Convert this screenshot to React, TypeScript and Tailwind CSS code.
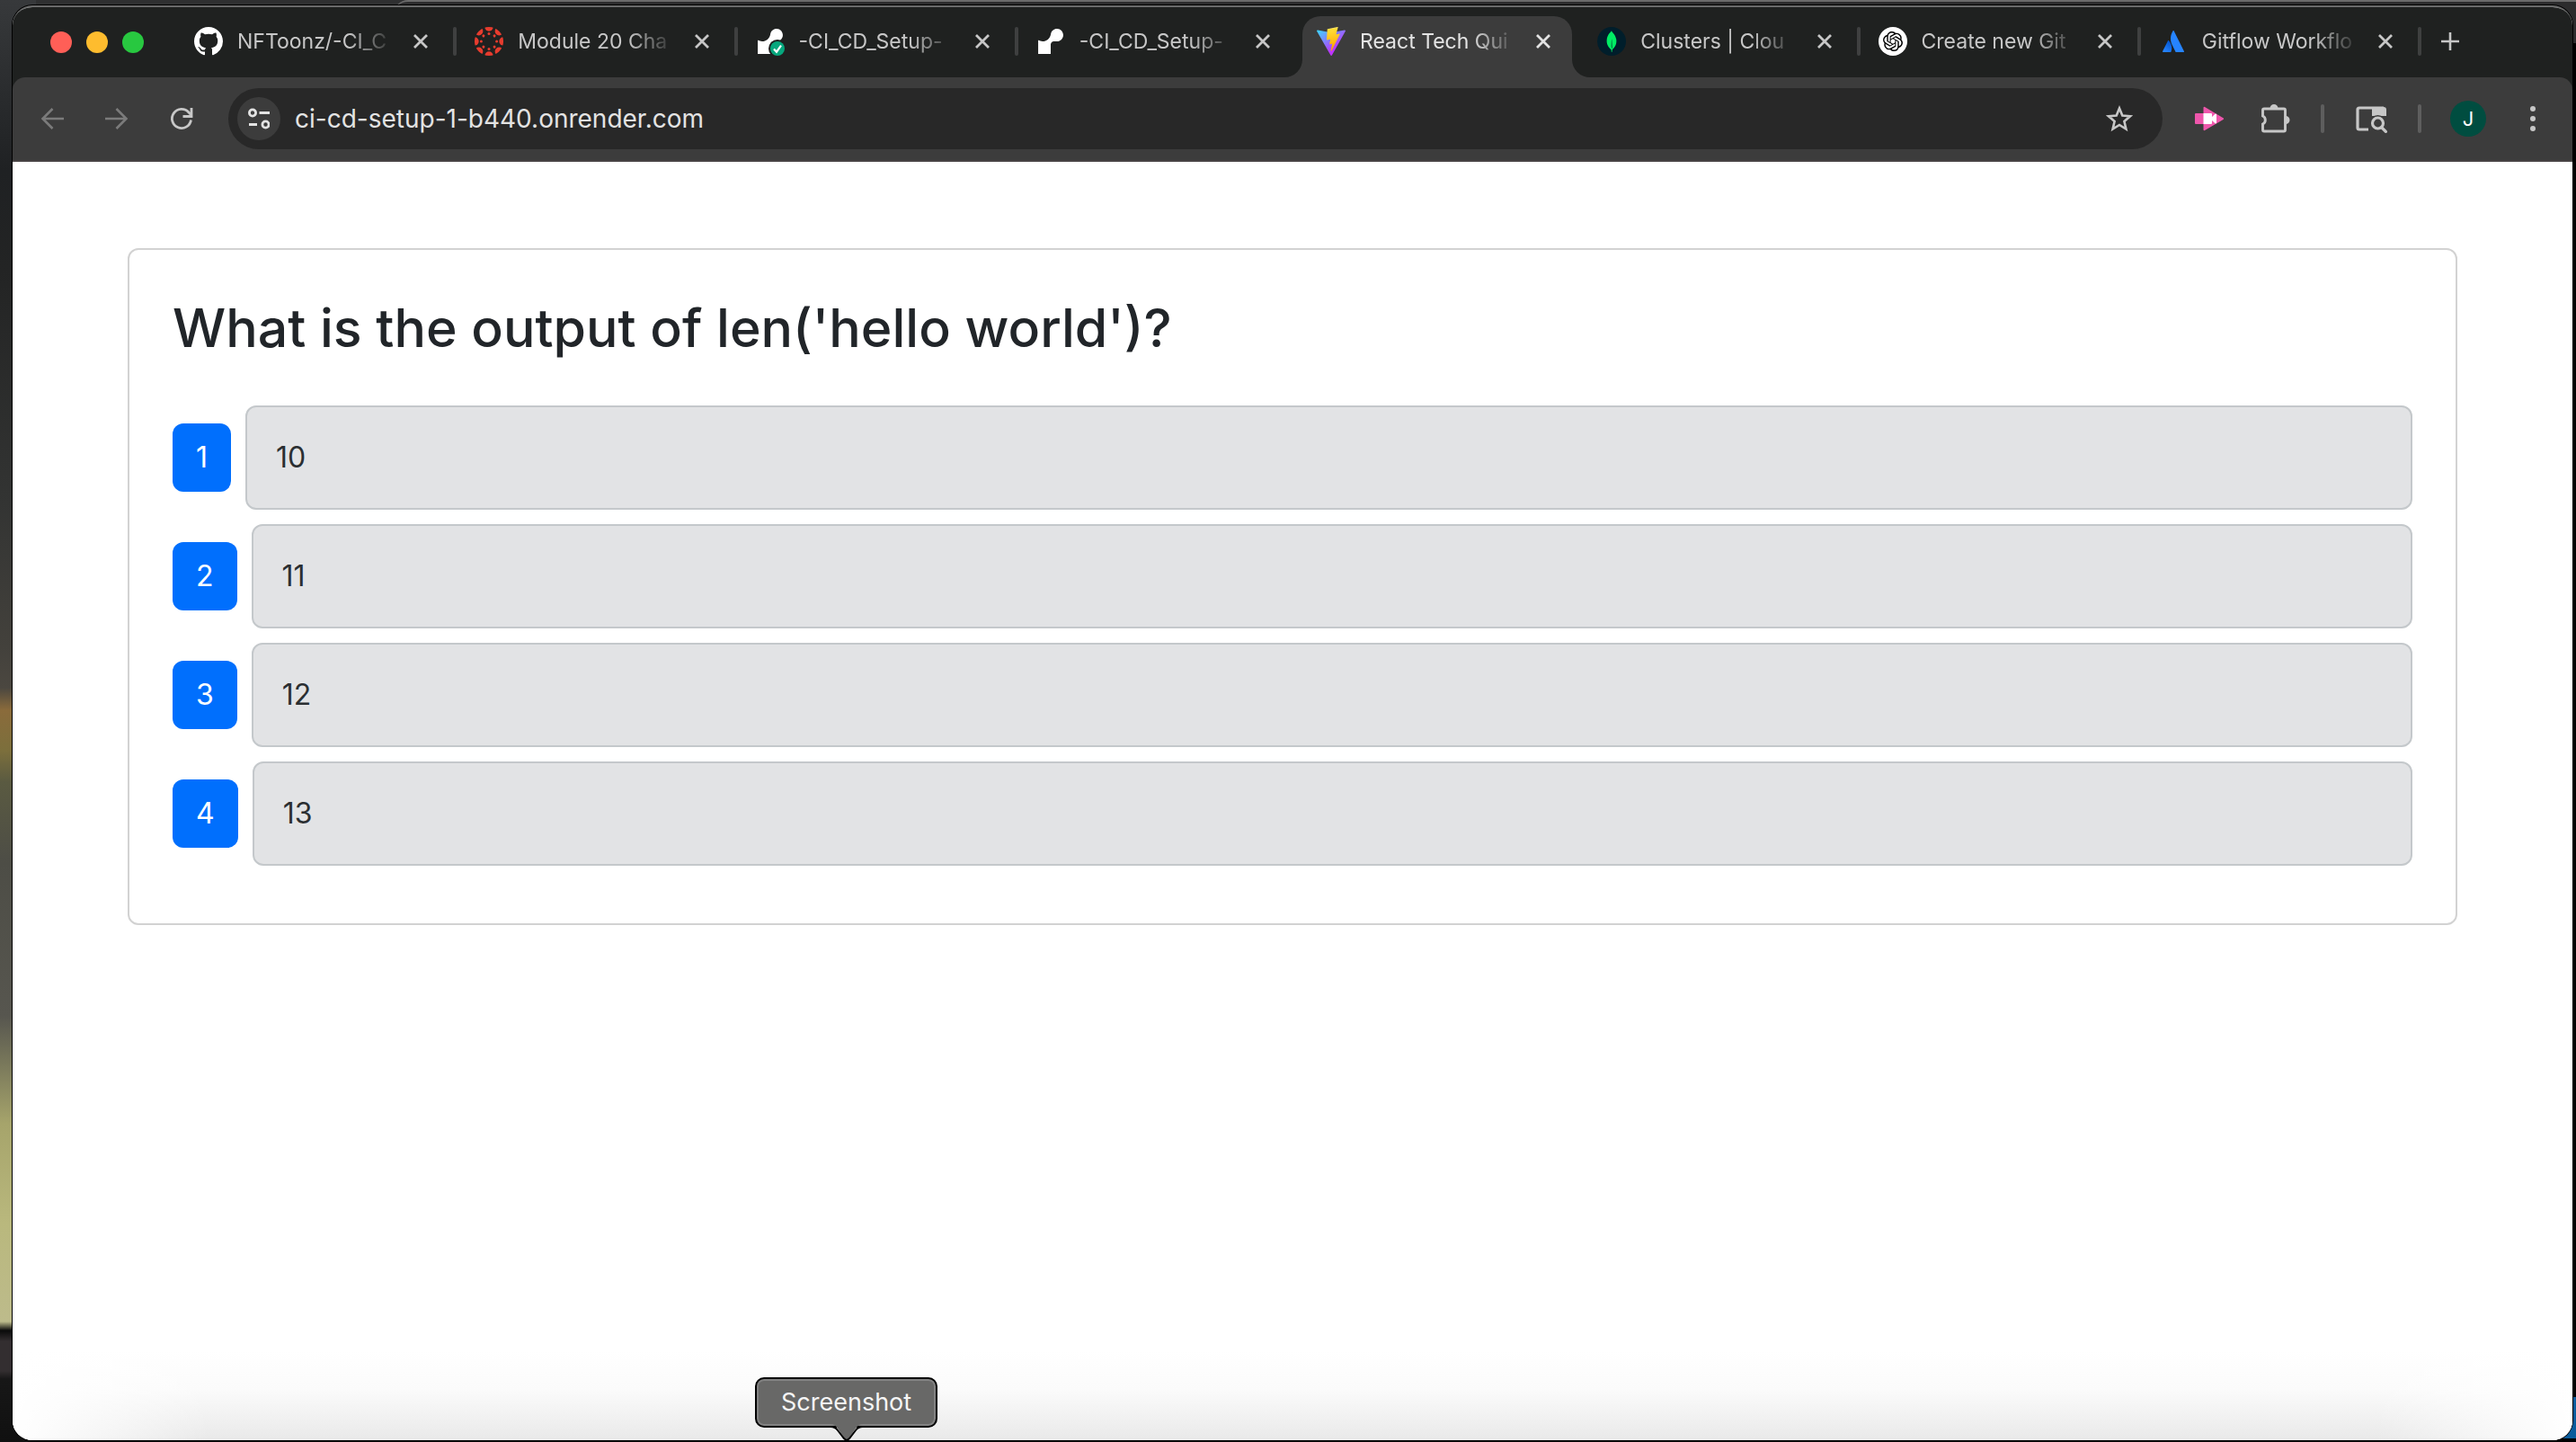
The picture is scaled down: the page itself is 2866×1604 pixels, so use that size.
import type { ReactNode } from "react";
import { SiMongodb, SiOpenai } from "react-icons/si";

const RENDER_PATH =
  "M18.263.007c-3.121-.147-5.744 2.109-6.192 5.082-.018.138-.045.272-.067.405-.696 3.703-3.936 6.507-7.827 6.507-1.388 0-2.691-.356-3.825-.979a.2024.2024 0 0 0-.302.178V24H12v-8.999c0-1.656 1.338-3 2.987-3h2.988c3.382 0 6.103-2.817 5.97-6.244-.12-3.084-2.61-5.603-5.682-5.75";

function GithubIcon() {
  return (
    <svg viewBox="0 0 16 16" className="size-8" fill="#fff" aria-hidden="true">
      <path d="M8 0C3.58 0 0 3.58 0 8c0 3.54 2.29 6.53 5.47 7.59.4.07.55-.17.55-.38 0-.19-.01-.82-.01-1.49-2.01.37-2.53-.49-2.69-.94-.09-.23-.48-.94-.82-1.13-.28-.15-.68-.52-.01-.53.63-.01 1.08.58 1.23.82.72 1.21 1.87.87 2.33.66.07-.52.28-.87.51-1.07-1.78-.2-3.64-.89-3.64-3.95 0-.87.31-1.59.82-2.15-.08-.2-.36-1.02.08-2.12 0 0 .67-.21 2.2.82.64-.18 1.32-.27 2-.27.68 0 1.36.09 2 .27 1.53-1.04 2.2-.82 2.2-.82.44 1.1.16 1.92.08 2.12.51.56.82 1.27.82 2.15 0 3.07-1.87 3.75-3.65 3.95.29.25.54.73.54 1.48 0 1.07-.01 1.93-.01 2.2 0 .21.15.46.55.38A8.013 8.013 0 0016 8c0-4.42-3.58-8-8-8z" />
    </svg>
  );
}

function CanvasIcon() {
  const spokes = [0, 45, 90, 135, 180, 225, 270, 315];
  return (
    <svg viewBox="0 0 32 32" className="size-8" fill="#e73c2e" aria-hidden="true">
      <clipPath id="canvas-disc">
        <circle cx="16" cy="16" r="16" />
      </clipPath>
      <g clipPath="url(#canvas-disc)">
        {spokes.map((angle) => (
          <g key={angle} transform={`rotate(${angle} 16 16)`}>
            <circle cx="16" cy="0" r="4.7" />
            <circle cx="16" cy="7.4" r="1.5" />
          </g>
        ))}
      </g>
    </svg>
  );
}

function RenderIcon({ passed = false }: { passed?: boolean }) {
  return (
    <svg viewBox="0 0 32 32" className="size-8" aria-hidden="true">
      <g transform="translate(2 2) scale(1.1667)">
        <path d={RENDER_PATH} fill="#fff" />
      </g>
      {passed && (
        <>
          <circle cx="24" cy="24" r="10" fill="#1f2120" />
          <circle cx="24" cy="24" r="8" fill="#06a77d" />
          <path d="m20 24.5 3 3.2 5-7" fill="none" stroke="#fff" strokeWidth="2.2" />
        </>
      )}
    </svg>
  );
}

function ViteIcon() {
  return (
    <svg viewBox="0 0 256 257" className="size-8" aria-hidden="true">
      <defs>
        <linearGradient id="vite-a" x1="-.828%" x2="57.636%" y1="7.652%" y2="78.411%">
          <stop offset="0%" stopColor="#41D1FF" />
          <stop offset="100%" stopColor="#BD34FE" />
        </linearGradient>
        <linearGradient id="vite-b" x1="43.376%" x2="50.316%" y1="2.242%" y2="89.03%">
          <stop offset="0%" stopColor="#FFEA83" />
          <stop offset="8.333%" stopColor="#FFDD35" />
          <stop offset="100%" stopColor="#FFA800" />
        </linearGradient>
      </defs>
      <path
        fill="url(#vite-a)"
        d="M255.153 37.938L134.897 252.976c-2.483 4.44-8.862 4.466-11.382.048L.875 37.958c-2.746-4.814 1.371-10.646 6.827-9.67l120.385 21.517a6.537 6.537 0 0 0 2.322-.004l117.867-21.483c5.438-.991 9.574 4.796 6.877 9.62Z"
      />
      <path
        fill="url(#vite-b)"
        d="M185.432.063L96.44 17.501a3.268 3.268 0 0 0-2.634 3.014l-5.474 92.456a3.268 3.268 0 0 0 3.997 3.378l24.777-5.718c2.318-.535 4.413 1.507 3.936 3.838l-7.361 36.047c-.495 2.426 1.782 4.5 4.151 3.78l15.304-4.649c2.372-.72 4.652 1.36 4.15 3.788l-11.698 56.621c-.732 3.542 3.979 5.473 5.943 2.437l1.313-2.028l72.516-144.72c1.215-2.423-.88-5.186-3.54-4.672l-25.505 4.922c-2.396.462-4.435-1.77-3.759-4.114l16.646-57.705c.677-2.35-1.37-4.583-3.769-4.113Z"
      />
    </svg>
  );
}

function AtlassianIcon() {
  return (
    <svg viewBox="0 0 32 32" className="size-8" aria-hidden="true">
      <defs>
        <linearGradient id="atl" x1="13" y1="16" x2="6" y2="27" gradientUnits="userSpaceOnUse">
          <stop offset="0" stopColor="#0052cc" />
          <stop offset="1" stopColor="#2684ff" />
        </linearGradient>
      </defs>
      <path
        fill="url(#atl)"
        d="M11.2 15.4c-.4-.5-1-.4-1.3.1L4.1 27.1c-.2.5.1 1 .6 1h8.100c.3 0 .5-.2.6-.4 1.800-3.600.7-9.100-2.200-12.300Z"
      />
      <path
        fill="#2684ff"
        d="M15.500 4.400c-3.300 5.200-3 11-.9 15.300l3.900 8c.1.200.4.400.600.400h8.200c.5 0 .900-.5.600-1L16.700 4.400c-.3-.5-.9-.5-1.200 0Z"
      />
    </svg>
  );
}

function Disc({ className, children }: { className: string; children: ReactNode }) {
  return <span className={`flex size-8 items-center justify-center rounded-full ${className}`}>{children}</span>;
}

type Tab = { title: string; icon: ReactNode; active?: boolean };

const tabs: Tab[] = [
  { title: "NFToonz/-CI_C", icon: <GithubIcon /> },
  { title: "Module 20 Cha", icon: <CanvasIcon /> },
  { title: "-CI_CD_Setup-", icon: <RenderIcon passed /> },
  { title: "-CI_CD_Setup-", icon: <RenderIcon /> },
  { title: "React Tech Qui", icon: <ViteIcon />, active: true },
  {
    title: "Clusters | Clou",
    icon: (
      <Disc className="bg-[#001e2b]">
        <SiMongodb className="size-6 text-[#00ed64]" />
      </Disc>
    ),
  },
  {
    title: "Create new Git",
    icon: (
      <Disc className="bg-white">
        <SiOpenai className="size-[22px] text-black" />
      </Disc>
    ),
  },
  { title: "Gitflow Workflo", icon: <AtlassianIcon /> },
];

function Flare({ side }: { side: "left" | "right" }) {
  return (
    <svg
      viewBox="0 0 20 20"
      className={side === "left" ? "absolute right-full bottom-0 size-5" : "absolute bottom-0 left-full size-5"}
      fill="#3c3c3c"
      aria-hidden="true"
    >
      <path d={side === "left" ? "M20 0v20H0A20 20 0 0 0 20 0Z" : "M0 0v20h20A20 20 0 0 1 0 0Z"} />
    </svg>
  );
}

function TabItem({ tab, divided }: { tab: Tab; divided: boolean }) {
  return (
    <div className="relative flex min-w-0 flex-1 px-[6px]">
      <div
        className={
          tab.active
            ? "relative flex min-w-0 flex-1 items-center rounded-t-[20px] bg-[#3c3c3c] pr-5 pl-4 text-[#e3e3e3]"
            : "relative flex min-w-0 flex-1 items-center pr-5 pl-4 text-[#c7c7c7]"
        }
      >
        {tab.active && <Flare side="left" />}
        {tab.active && <Flare side="right" />}
        <button role="tab" aria-selected={!!tab.active} className="mb-3 flex min-w-0 flex-1 items-center gap-4">
          <span className="shrink-0">{tab.icon}</span>
          <span className="w-[176px] text-left text-[23px] leading-8 whitespace-nowrap [mask-image:linear-gradient(to_right,black_70%,transparent_100%)]">
            {tab.title}
          </span>
        </button>
        <button aria-label={`Close ${tab.title}`} className="mb-3 flex size-6 items-center justify-center">
          <svg viewBox="0 0 16 16" className="size-4" stroke="currentColor" strokeWidth="2.8" aria-hidden="true">
            <path d="m1 1 14 14M15 1 1 15" />
          </svg>
        </button>
      </div>
      {divided && <span className="absolute top-3 -right-[2px] h-8 w-1 rounded-full bg-[#3f4040]" />}
    </div>
  );
}

function TabStrip() {
  return (
    <div className="flex h-[78px] bg-[#1f2120] pt-[10px]">
      <div className="flex w-[180px] shrink-0 items-center gap-4 pb-[10px] pl-[42px]">
        <button aria-label="Close window" className="size-6 rounded-full bg-[#ff5f57]" />
        <button aria-label="Minimise window" className="size-6 rounded-full bg-[#febc2e]" />
        <button aria-label="Zoom window" className="size-6 rounded-full bg-[#28c840]" />
      </div>
      <div role="tablist" className="flex min-w-0 flex-1">
        {tabs.map((tab, i) => (
          <TabItem key={i} tab={tab} divided={!tab.active && !tabs[i + 1]?.active} />
        ))}
      </div>
      <div className="flex w-[170px] shrink-0 items-center pb-3 pl-[24px]">
        <button aria-label="New tab" className="text-[#c7c7c7]">
          <svg viewBox="0 0 20 20" className="size-5" stroke="currentColor" strokeWidth="2.6" aria-hidden="true">
            <path d="M10 0v20M0 10h20" />
          </svg>
        </button>
      </div>
    </div>
  );
}

function Toolbar() {
  return (
    <div className="bg-[#1f2120]">
      <div className="flex h-[94px] items-center rounded-t-[14px] border-b-2 border-[#474344] bg-[#3c3c3c] pr-10 pl-7 text-[#c7c7c7]">
        <div className="flex shrink-0 items-center gap-10">
          <button aria-label="Back" className="px-[2px] text-[#7b7b7b]">
            <svg viewBox="0 0 28 28" className="size-7" fill="none" stroke="currentColor" strokeWidth="2.6" aria-hidden="true">
              <path d="M27 14H4M14.500 3 3.500 14l11 11" />
            </svg>
          </button>
          <button aria-label="Forward" className="px-[2px] text-[#7b7b7b]">
            <svg viewBox="0 0 28 28" className="size-7" fill="none" stroke="currentColor" strokeWidth="2.6" aria-hidden="true">
              <path d="M1 14h23M13.500 3l11 11-11 11" />
            </svg>
          </button>
          <button aria-label="Reload" className="px-[2px]">
            <svg viewBox="0 0 28 28" className="size-7" fill="none" stroke="currentColor" strokeWidth="2.8" aria-hidden="true">
              <path d="M24.500 15.500A10.600 10.600 0 1 1 22 7l2.500 2.500" />
              <path d="M25 2v9.500h-9.500" />
            </svg>
          </button>
        </div>
        <div className="ml-9 flex h-[68px] min-w-0 flex-1 items-center rounded-full bg-[#282828] pr-8 pl-[10px]">
          <button aria-label="Site information" className="flex size-12 shrink-0 items-center justify-center rounded-full bg-[#3c3c3c] text-[#e3e3e3]">
            <svg viewBox="0 0 24 24" className="size-6" fill="none" stroke="currentColor" strokeWidth="2.800" aria-hidden="true">
              <circle cx="5" cy="5.500" r="3.600" />
              <path d="M12.500 5.500H24M1 18.500h9" />
              <circle cx="19.500" cy="18.500" r="3.600" />
            </svg>
          </button>
          <input
            aria-label="Address"
            defaultValue="ci-cd-setup-1-b440.onrender.com"
            className="ml-4 min-w-0 flex-1 bg-transparent text-[28px] leading-10 text-[#e3e3e3] outline-none"
          />
          <button aria-label="Bookmark this tab" className="shrink-0">
            <svg viewBox="0 0 32 32" className="size-8" fill="none" stroke="currentColor" strokeWidth="2.600" aria-hidden="true">
              <path d="m16 4.500 3.300 8.100 8.700.7-6.600 5.700 2 8.500-7.400-4.500-7.400 4.500 2-8.500L4 13.300l8.700-.7z" />
            </svg>
          </button>
        </div>
        <div className="ml-9 flex shrink-0 items-center">
          <button aria-label="Screen recorder">
            <svg viewBox="0 0 32 32" className="size-8" aria-hidden="true">
              <path d="M1 10h8.500V3.900a1 1 0 0 1 1.500-.9l20.500 12.200a1 1 0 0 1 0 1.700L11 29.100a1 1 0 0 1-1.500-.9V22H1a1 1 0 0 1-1-1V11a1 1 0 0 1 1-1Z" fill="#ee56ab" />
              <path d="M9.500 10H18a1 1 0 0 1 1 1v3l3.500-3.300H24v10.600h-1.500L19 18v3a1 1 0 0 1-1 1H9.500Z" fill="#fff" />
            </svg>
          </button>
          <button aria-label="Extensions" className="ml-10">
            <svg viewBox="0 0 36 36" className="size-9" aria-hidden="true">
              <path
                d="M5 7h22a1.500 1.500 0 0 1 1.500 1.500v22A1.500 1.500 0 0 1 27 32H5a1.500 1.500 0 0 1-1.500-1.500V24a5 5 0 0 0 0-9V8.500A1.500 1.500 0 0 1 5 7Z"
                fill="none"
                stroke="currentColor"
                strokeWidth="2.900"
              />
              <path d="M11.500 6.500a4.500 4.500 0 0 1 9 0ZM29 15a4.500 4.500 0 0 1 0 9Z" fill="currentColor" />
            </svg>
          </button>
          <span className="ml-8 h-8 w-1 rounded-full bg-[#5e5e5e]" />
          <button aria-label="Search tabs" className="ml-[34px]">
            <svg viewBox="0 0 36 32" className="h-8 w-9" fill="none" stroke="currentColor" strokeWidth="3.200" aria-hidden="true">
              <path d="M15 28H5a2 2 0 0 1-2-2V6a2 2 0 0 1 2-2h27" />
              <path d="M19 3h13a3 3 0 0 1 3 3v7H19Z" fill="currentColor" stroke="none" />
              <circle cx="25.500" cy="21" r="7.500" fill="#3c3c3c" stroke="#3c3c3c" />
              <circle cx="25.500" cy="21" r="6" />
              <path d="m29.500 25.500 6 6" />
            </svg>
          </button>
          <span className="ml-[34px] h-8 w-1 rounded-full bg-[#5e5e5e]" />
          <button aria-label="Profile" className="ml-8 flex size-10 items-center justify-center rounded-full bg-[#004d40] text-[22px] leading-8 text-white">
            J
          </button>
          <button aria-label="Menu" className="ml-12">
            <svg viewBox="0 0 8 30" className="h-[30px] w-2" fill="currentColor" aria-hidden="true">
              <circle cx="4" cy="4" r="3" />
              <circle cx="4" cy="15" r="3" />
              <circle cx="4" cy="26" r="3" />
            </svg>
          </button>
        </div>
      </div>
    </div>
  );
}

const answers = ["10", "11", "12", "13"];

function Quiz() {
  return (
    <main className="flex-1 bg-[linear-gradient(to_right,#ffffff_0px,#ffffff00_220px,#ffffff00_calc(100%-220px),#ffffff_100%),linear-gradient(to_bottom,#ffffff_93%,#fbfbfb_96%,#e9e9e9_100%)] px-32 pt-24">
      <section className="rounded-xl border-2 border-[#d2d2d2] bg-white p-12 text-[#212529]">
        <h2 className="text-[59px] leading-[77px] font-medium">What is the output of len('hello world')?</h2>
        <ol className="mt-12">
          {answers.map((answer, i) => (
            <li key={answer} className="mb-4 flex items-center gap-4">
              <button className="rounded-xl bg-[#006ffd] px-[26px] py-[14px] text-[32px] leading-[48px] text-white">
                {i + 1}
              </button>
              <div className="flex-1 rounded-xl border-2 border-[#c4c8cb] bg-[#e2e3e5] px-8 py-8 text-[32px] leading-[48px] text-[#2b2f32]">
                {answer}
              </div>
            </li>
          ))}
        </ol>
      </section>
    </main>
  );
}

function DockTooltip() {
  return (
    <div role="tooltip" className="absolute bottom-4 left-[840px]">
      <div className="rounded-[10px] border-2 border-black bg-[#686867] px-[27px] py-[11px] text-[27px] leading-[30px] text-[#f5f5f5] shadow-[inset_0_0_0_2px_#828282]">
        Screenshot
      </div>
      <svg viewBox="0 0 36 18" className="absolute top-full left-1/2 -mt-1 h-[18px] w-9 -translate-x-1/2" aria-hidden="true">
        <path d="M0 0h36c-4 0-6 2-8 5l-7 10q-3 3-6 0L8 5C6 2 4 0 0 0Z" fill="#686867" />
        <path d="M0 3c4 0 6 1 8 4l7 9q3 3 6 0l7-9c2-3 4-4 8-4" fill="none" stroke="#000" strokeWidth="2" />
      </svg>
    </div>
  );
}

export default function App() {
  return (
    <div className="relative flex min-h-screen flex-col overflow-hidden bg-black font-[Inter,'Liberation_Sans',sans-serif]">
      <div className="absolute inset-x-0 top-0 h-12 bg-[#2f3031]" />
      <div className="absolute top-0 right-0 left-[438px] h-12 rounded-tl-2xl border-t-2 border-[#6b6b6b] bg-[#2c2c2d]" />
      <div className="absolute inset-y-0 left-0 w-10 bg-[linear-gradient(to_bottom,#37393b_0px,#1f2123_190px,#232424_300px,#333433_560px,#43413c_720px,#4b4740_765px,#8a6b3b_790px,#7c6f3c_835px,#5a5a41_870px,#4d4d46_960px,#57564f_1130px,#77765a_1180px,#a6a46b_1250px,#b9b87d_1360px,#bdbb8b_1470px,#0a0a0a_1480px,#332e30_1492px,#332e30_1525px,#171717_1534px,#101010_1604px)]" />
      <div className="absolute right-0 bottom-1 h-[46px] w-10 bg-[#0a5c9c]" />
      <div className="relative mt-[6px] mr-[4px] mb-[2px] ml-[14px] flex flex-1 flex-col overflow-hidden rounded-[22px] border-t-2 border-[#6a6b6b] bg-white shadow-[0_0_0_1px_#000]">
        <TabStrip />
        <Toolbar />
        <Quiz />
      </div>
      <DockTooltip />
    </div>
  );
}
